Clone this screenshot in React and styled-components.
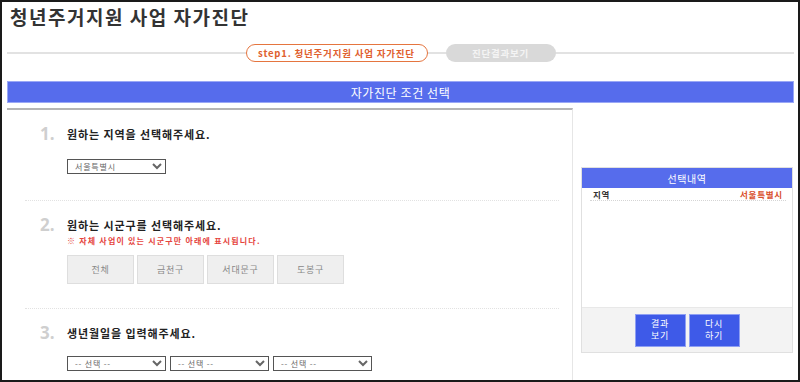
import React from "react";
import styled, { createGlobalStyle } from "styled-components";

const GlobalStyle = createGlobalStyle`
  html, body {
    margin: 0;
    padding: 0;
    background: #fff;
  }
  body {
    font-family: "Noto Sans CJK KR", "Noto Sans", sans-serif;
    color: #333;
  }
`;

const Frame = styled.div`
  width: 800px;
  height: 382px;
  box-sizing: border-box;
  border: 2px solid #1a1a1a;
  padding: 0 4px 0 5px;
  overflow: hidden;
  display: flex;
  flex-direction: column;
`;

const PageTitle = styled.h1`
  margin: 3px 0 0 3px;
  font-size: 19px;
  line-height: 24px;
  font-weight: 700;
  color: #333;
  letter-spacing: 1.5px;
`;

const StepBar = styled.div`
  margin-top: 15px;
  height: 18px;
  display: flex;
  justify-content: center;
  align-items: center;
  gap: 18px;
  background: linear-gradient(#e2e2e2, #e2e2e2) center / 100% 2px no-repeat;
`;

const StepPill = styled.div`
  height: 18px;
  box-sizing: border-box;
  border-radius: 9px;
  width: ${(p) => (p.$active ? "182px" : "110px")};
  display: flex;
  align-items: center;
  justify-content: center;
  font-size: 9.5px;
  font-weight: 700;
  letter-spacing: 0.8px;
  color: ${(p) => (p.$active ? "#e0602e" : "#f4f4f4")};
  background: ${(p) => (p.$active ? "#fff" : "#d9d9d9")};
  border: ${(p) => (p.$active ? "1.5px solid #e5753f" : "none")};
  white-space: nowrap;
`;

const SectionBar = styled.div`
  margin-top: 19px;
  height: 22px;
  box-sizing: border-box;
  background: #566cec;
  border: 1px solid #9aa8f6;
  color: #fff;
  font-size: 12px;
  letter-spacing: 0.6px;
  display: flex;
  align-items: center;
  justify-content: center;
`;

const Body = styled.div`
  margin-top: 5px;
  flex: 1;
  display: grid;
  grid-template-columns: 566px 1fr;
  min-height: 0;
`;

const LeftCol = styled.div`
  border-top: 2px solid #b5b5b5;
  border-right: 1px solid #e6e6e6;
`;

const Section = styled.div`
  margin: 0 13px 0 18px;
  padding: 16px 0 ${(p) => p.$pb || 24}px 15px;
  border-bottom: ${(p) => (p.$last ? "none" : "1px dotted #e2e2e2")};
  display: flex;
`;

const Num = styled.div`
  width: 27px;
  font-size: 17px;
  line-height: 16px;
  font-weight: 700;
  color: #cfcfcf;
  font-family: "Open Sans", "Noto Sans", sans-serif;
`;

const SectionContent = styled.div`
  display: flex;
  flex-direction: column;
  align-items: flex-start;
`;

const Question = styled.div`
  font-size: 11px;
  line-height: 16px;
  font-weight: 700;
  letter-spacing: 0.9px;
  color: #222;
`;

const Note = styled.div`
  margin-top: 3px;
  font-size: 8px;
  line-height: 10px;
  font-weight: 700;
  letter-spacing: 1.2px;
  color: #e5443d;
`;

const SelectRow = styled.div`
  margin-top: ${(p) => p.$mt || 15}px;
  display: flex;
  gap: 4px;
`;

const Select = styled.select`
  width: 99px;
  height: 15px;
  box-sizing: border-box;
  padding: 0 0 0 3px;
  border: 1.5px solid #555;
  border-radius: 0;
  background: #fff;
  font-family: "Noto Sans CJK KR", sans-serif;
  font-size: 8px;
  letter-spacing: 0.8px;
  color: #666;
  outline: none;
`;

const DistrictRow = styled.div`
  margin-top: 9px;
  display: flex;
  gap: 3px;
`;

const District = styled.button`
  width: 67px;
  height: 29px;
  box-sizing: border-box;
  background: #efefef;
  border: 1px solid #dedede;
  font-family: "Noto Sans CJK KR", sans-serif;
  font-size: 9px;
  letter-spacing: 0.8px;
  color: #888;
  cursor: pointer;
`;

const RightCol = styled.div`
  padding: 59px 1px 0 8px;
`;

const SummaryBox = styled.div`
  border: 1px solid #e0e0e0;
  display: flex;
  flex-direction: column;
`;

const SummaryHead = styled.div`
  height: 20px;
  background: #566cec;
  color: #fff;
  font-size: 10px;
  letter-spacing: 0.6px;
  display: flex;
  align-items: center;
  justify-content: center;
`;

const SummaryBody = styled.div`
  height: 119px;
  padding: 0 6px 0 8px;
  background: #fff;
`;

const SummaryItem = styled.div`
  display: flex;
  justify-content: space-between;
  align-items: center;
  height: 12px;
  padding-right: 3px;
  border-bottom: 1px dotted #d5d5d5;
  font-size: 8.5px;
  letter-spacing: 0.8px;
`;

const ItemLabel = styled.span`
  font-weight: 700;
  color: #333;
  padding-left: 3px;
`;

const ItemValue = styled.span`
  color: #d9502d;
  font-weight: 700;
`;

const SummaryFoot = styled.div`
  height: 44px;
  background: #f3f3f3;
  border-top: 1px solid #e8e8e8;
  display: flex;
  justify-content: center;
  align-items: center;
  gap: 3px;
`;

const ActionButton = styled.button`
  width: 51px;
  height: 33px;
  box-sizing: border-box;
  background: #3e5ae8;
  border: 1px solid #8e9ff3;
  color: #fff;
  font-family: "Noto Sans CJK KR", sans-serif;
  font-size: 9px;
  line-height: 12px;
  letter-spacing: 0.8px;
  padding: 0;
  cursor: pointer;
`;

const districts = ["전체", "금천구", "서대문구", "도봉구"];

export default function App() {
  return (
    <>
      <GlobalStyle />
      <Frame>
        <PageTitle>청년주거지원 사업 자가진단</PageTitle>
        <StepBar>
          <StepPill $active>step1. 청년주거지원 사업 자가진단</StepPill>
          <StepPill>진단결과보기</StepPill>
        </StepBar>
        <SectionBar>자가진단 조건 선택</SectionBar>
        <Body>
          <LeftCol>
            <Section $pb={26}>
              <Num>1.</Num>
              <SectionContent>
                <Question>원하는 지역을 선택해주세요.</Question>
                <SelectRow $mt={17}>
                  <Select defaultValue="seoul">
                    <option value="seoul">서울특별시</option>
                  </Select>
                </SelectRow>
              </SectionContent>
            </Section>
            <Section>
              <Num>2.</Num>
              <SectionContent>
                <Question>원하는 시군구를 선택해주세요.</Question>
                <Note>※ 자체 사업이 있는 시군구만 아래에 표시됩니다.</Note>
                <DistrictRow>
                  {districts.map((d) => (
                    <District key={d}>{d}</District>
                  ))}
                </DistrictRow>
              </SectionContent>
            </Section>
            <Section $last>
              <Num>3.</Num>
              <SectionContent>
                <Question>생년월일을 입력해주세요.</Question>
                <SelectRow>
                  {[0, 1, 2].map((i) => (
                    <Select key={i} defaultValue="">
                      <option value="">-- 선택 --</option>
                    </Select>
                  ))}
                </SelectRow>
              </SectionContent>
            </Section>
          </LeftCol>
          <RightCol>
            <SummaryBox>
              <SummaryHead>선택내역</SummaryHead>
              <SummaryBody>
                <SummaryItem>
                  <ItemLabel>지역</ItemLabel>
                  <ItemValue>서울특별시</ItemValue>
                </SummaryItem>
              </SummaryBody>
              <SummaryFoot>
                <ActionButton>
                  결과
                  <br />
                  보기
                </ActionButton>
                <ActionButton>
                  다시
                  <br />
                  하기
                </ActionButton>
              </SummaryFoot>
            </SummaryBox>
          </RightCol>
        </Body>
      </Frame>
    </>
  );
}
